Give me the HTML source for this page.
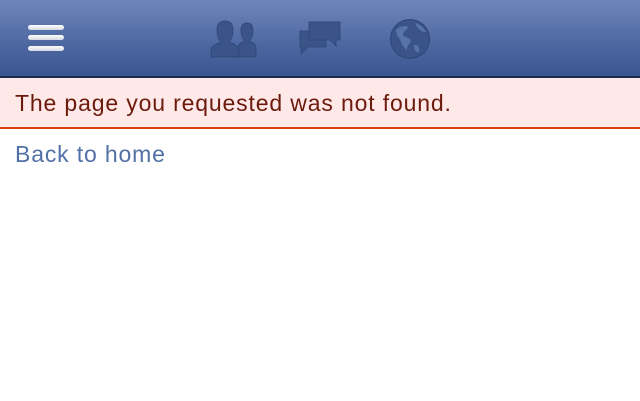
<!DOCTYPE html>
<html><head><style>
body{margin:0;width:640px;height:401px;background:#fff;font-family:"Liberation Sans",sans-serif;overflow:hidden}
.hd{position:absolute;left:0;top:0;width:640px;height:76px;background:linear-gradient(#6e86ba,#4f69a2 55%,#3a5691);border-bottom:2px solid #1b2a4d}
.bar{position:absolute;left:28px;width:36px;height:5px;border-radius:3px;background:linear-gradient(#fff,#d4d8e2)}
.err{position:absolute;left:0;top:78px;width:640px;height:49px;background:#ffe9e8;border-bottom:2px solid #dd3c10}
.err span{position:absolute;left:15px;top:12px;font-size:23px;letter-spacing:0.85px;color:#6b1a0c}
.lk{position:absolute;left:15px;top:141px;font-size:23px;letter-spacing:0.85px;color:#5170a6}
</style></head><body>
<div class="hd">
<div class="bar" style="top:25px"></div><div class="bar" style="top:35px"></div><div class="bar" style="top:46px"></div>
<svg style="position:absolute;left:205px;top:17px" width="56" height="44" viewBox="0 0 56 44">
<g fill="#3a5489" stroke="#2e4577" stroke-width="0.8">
<path d="M33 40 L33 31 C33 27 37 25 40 24 C37 21 36 17 36 14 C36 9 38 6 42 6 C46 6 48 9 48 14 C48 17 47 21 44 24 C47 25 51 27 51 31 L51 40 Z"/>
<path d="M6 40 L6 33 C6 29 11 27 16 25 C13 22 12 18 12 13 C12 7 15 4 20 4 C25 4 28 7 28 13 C28 18 27 22 24 25 C29 27 34 29 34 33 L34 40 Z"/>
</g></svg>
<svg style="position:absolute;left:298px;top:19px" width="46" height="40" viewBox="0 0 46 40">
<g fill="#3a5489" stroke="#2e4577" stroke-width="0.8">
<path d="M2 12 h26 v16 h-18 l-7 7 v-7 h-1 z"/>
<path d="M11 3 h31 v18 h-4 v6 l-6 -6 h-21 z"/>
</g></svg>
<svg style="position:absolute;left:388px;top:18px" width="44" height="44" viewBox="0 0 44 44">
<circle cx="22" cy="21" r="19.5" fill="#3a5489" stroke="#2e4577"/>
<path d="M8 12 C12 8 18 7 20 9 C19 13 15 13 15 17 C17 20 22 19 23 23 C21 26 19 28 19 32 C15 29 13 25 12 21 C9 19 8 15 8 12Z M26 27 C30 26 32 30 31 34 C28 35 26 32 26 27Z M27 5 C32 6 36 10 38 14 C34 14 30 12 27 5Z" fill="#5873a8"/>
</svg>
</div>
<div class="err"><span>The page you requested was not found.</span></div>
<div class="lk">Back to home</div>
</body></html>
